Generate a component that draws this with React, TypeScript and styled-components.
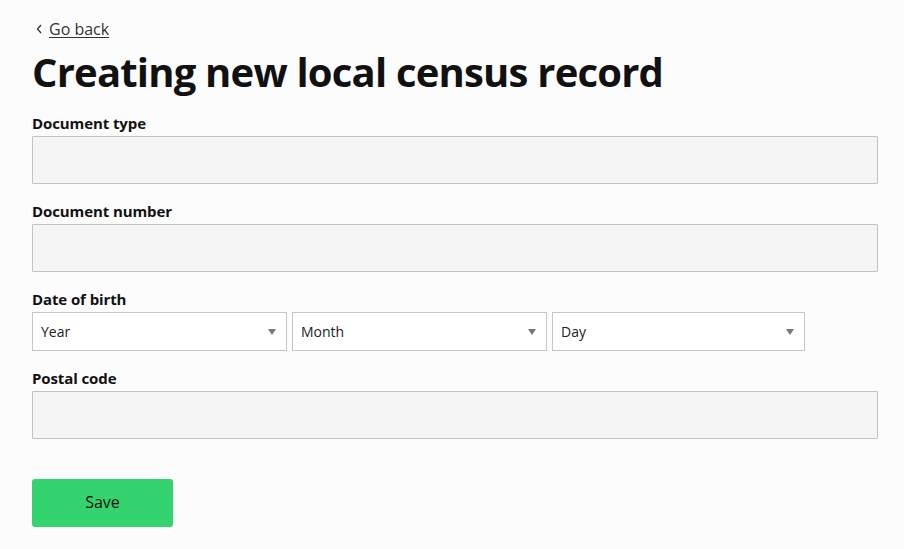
import React from "react";
import styled, { createGlobalStyle } from "styled-components";

const Global = createGlobalStyle`
  html, body { margin: 0; padding: 0; background: #fcfcfc; }
  body { font-family: "Open Sans", "Liberation Sans", sans-serif; color: #111; }
  * { box-sizing: border-box; }
`;

const Page = styled.div`
  padding: 16px 26px 20px 32px;
  display: flex;
  flex-direction: column;
`;

const BackLink = styled.a`
  display: inline-flex;
  align-items: center;
  gap: 6px;
  font-size: 16px;
  color: #333;
  height: 26px;
  margin-left: 4px;
  span { text-decoration: underline; text-underline-offset: 2px; }
`;

const Title = styled.h1`
  margin: 2px 0 12px 0;
  font-size: 40px;
  line-height: 56px;
  font-weight: 700;
  letter-spacing: -0.8px;
  color: #111;
`;

const Field = styled.div<{ $mb?: number }>`
  display: flex;
  flex-direction: column;
  margin-bottom: ${(p) => p.$mb ?? 16}px;
`;

const Label = styled.label`
  font-size: 15px;
  font-weight: 700;
  line-height: 22px;
  height: 24px;
  color: #111;
  letter-spacing: -0.1px;
`;

const TextInput = styled.input`
  height: 48px;
  width: 100%;
  background: #f5f5f5;
  border: 1px solid #c2c2c2;
  border-radius: 1px;
  font: inherit;
  padding: 0 8px;
`;

const SelectRow = styled.div`
  display: flex;
  gap: 5px;
`;

const SelectBox = styled.div<{ $w?: number }>`
  width: ${(p) => p.$w ?? 255}px;
  height: 39px;
  background: #fff;
  border: 1px solid #c6c6c6;
  display: flex;
  align-items: center;
  justify-content: space-between;
  padding: 0 10px 0 8px;
  font-size: 14px;
  color: #222;
`;

const Caret = styled.span`
  width: 0;
  height: 0;
  border-left: 4px solid transparent;
  border-right: 4px solid transparent;
  border-top: 6px solid #777;
`;

const SaveButton = styled.button`
  margin-top: 40px;
  width: 141px;
  height: 48px;
  padding: 0 0 3px 0;
  background: #33d46e;
  border: none;
  border-radius: 3px;
  font: inherit;
  font-size: 16px;
  color: #111;
`;

const Chevron = () => (
  <svg width="7" height="10" viewBox="0 0 7 10">
    <path d="M5 1 L1.5 5 L5 9" fill="none" stroke="#333" strokeWidth="1.3" />
  </svg>
);

export default function App() {
  return (
    <>
      <Global />
      <Page>
        <BackLink>
          <Chevron />
          <span>Go back</span>
        </BackLink>
        <Title>Creating new local census record</Title>
        <Field>
          <Label>Document type</Label>
          <TextInput />
        </Field>
        <Field>
          <Label>Document number</Label>
          <TextInput />
        </Field>
        <Field>
          <Label>Date of birth</Label>
          <SelectRow>
            <SelectBox>Year<Caret /></SelectBox>
            <SelectBox>Month<Caret /></SelectBox>
            <SelectBox $w={253}>Day<Caret /></SelectBox>
          </SelectRow>
        </Field>
        <Field $mb={0}>
          <Label>Postal code</Label>
          <TextInput />
        </Field>
        <div>
          <SaveButton>Save</SaveButton>
        </div>
      </Page>
    </>
  );
}
